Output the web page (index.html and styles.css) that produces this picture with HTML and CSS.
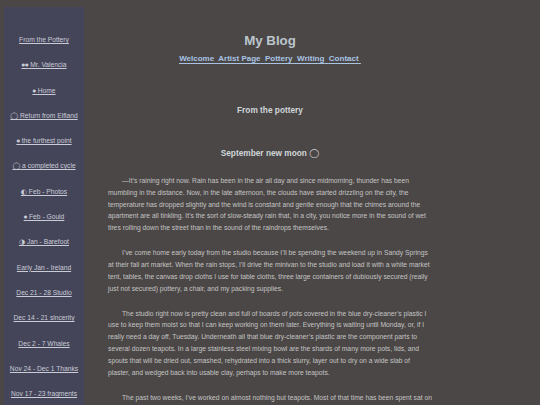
FILE: index.html
```html
<!DOCTYPE html>
<html>
<head>
    <title>My Blog</title>
    <link rel="stylesheet" href="styles.css">
</head>
<body>
    <div class="page">
        <div class="sidebar">
            <a href="#">From the Pottery</a>
            <a href="#"><span class="moon dot">●●</span> Mr. Valencia</a>
            <a href="#"><span class="moon dot">●</span> Home</a>
            <a href="#"><span class="moon">◯</span> Return from Elfland</a>
            <a href="#"><span class="moon dot">●</span> the furthest point</a>
            <a href="#"><span class="moon">◯</span> a completed cycle</a>
            <a href="#"><span class="moon">◐</span> Feb - Photos</a>
            <a href="#"><span class="moon dot">●</span> Feb - Gould</a>
            <a href="#"><span class="moon">◑</span> Jan - Barefoot</a>
            <a href="#">Early Jan - Ireland</a>
            <a href="#">Dec 21 - 28 Studio</a>
            <a href="#">Dec 14 - 21 sincerity</a>
            <a href="#">Dec 2 - 7 Whales</a>
            <a href="#">Nov 24 - Dec 1 Thanks</a>
            <a href="#">Nov 17 - 23 fragments</a>
            <a href="#">Nov 10 - 16 glaze</a>
        </div>
        <div class="main">
            <div class="blog-title">My Blog</div>
            <div class="menu"><span class="menu-line"><a href="#">Welcome</a>&nbsp; <a href="#">Artist Page</a>&nbsp; <a href="#">Pottery</a>&nbsp; <a href="#">Writing</a>&nbsp; <a href="#">Contact</a>&nbsp;</span></div>

            <h2 class="section-title">From the pottery</h2>
            <h3 class="post-title">September new moon <span class="moon">◯</span></h3>

            <p>—It’s raining right now. Rain has been in the air all day and since midmorning, thunder has been mumbling in the distance. Now, in the late afternoon, the clouds have started drizzling on the city, the temperature has dropped slightly and the wind is constant and gentle enough that the chimes around the apartment are all tinkling. It’s the sort of slow-steady rain that, in a city, you notice more in the sound of wet tires rolling down the street than in the sound of the raindrops themselves.</p>

            <p>I’ve come home early today from the studio because I’ll be spending the weekend up in Sandy Springs at their fall art market. When the rain stops, I’ll drive the minivan to the studio and load it with a white market tent, tables, the canvas drop cloths I use for table cloths, three large containers of dubiously secured (really just not secured) pottery, a chair, and my packing supplies.</p>

            <p>The studio right now is pretty clean and full of boards of pots covered in the blue dry-cleaner’s plastic I use to keep them moist so that I can keep working on them later. Everything is waiting until Monday, or, if I really need a day off, Tuesday. Underneath all that blue dry-cleaner’s plastic are the component parts to several dozen teapots. In a large stainless steel mixing bowl are the shards of many more pots, lids, and spouts that will be dried out, smashed, rehydrated into a thick slurry, layer out to dry on a wide slab of plaster, and wedged back into usable clay, perhaps to make more teapots.</p>

            <p>The past two weeks, I’ve worked on almost nothing but teapots. Most of that time has been spent sat on the stool at the wheel, throwing bodies and lids and spouts, trimming them and putting them back under plastic.</p>
        </div>
    </div>
</body>
</html>
```

FILE: styles.css
```css
body {
    margin: 0;
    background-color: #4b4746;
    font-family: "Liberation Sans", Arial, sans-serif;
    color: #c4c4c4;
}
.page {
    display: flex;
    align-items: flex-start;
}

/* Left column of post links */
.sidebar {
    flex: none;
    width: 80px;
    margin: 7px 0 0 4px;
    padding: 28px 0 20px;
    background-color: #45455a;
    display: flex;
    flex-direction: column;
    align-items: center;
    gap: 15.3px;
}
.sidebar a {
    color: #c9ccd6;
    font-size: 6.7px;
    line-height: 10px;
    white-space: nowrap;
}
.moon {
    font-family: "DejaVu Sans", sans-serif;
    font-size: 7px;
}
.moon.dot {
    font-size: 4px;
    vertical-align: 1px;
}

/* Main column */
.main {
    flex: 1;
    padding: 33px 108px 0 24px;
}
.blog-title {
    text-align: center;
    font-size: 13.3px;
    line-height: 16px;
    font-weight: bold;
    color: #bcc6cc;
}
.menu {
    margin-top: 5px;
    text-align: center;
    font-size: 8px;
    line-height: 10px;
    font-weight: bold;
}
.menu-line {
    text-decoration: underline;
    text-underline-offset: 2px;
    color: #a9c3e2;
}
.menu a {
    color: #a9c3e2;
}
.section-title {
    margin: 41px 0 0;
    text-align: center;
    font-size: 8.3px;
    line-height: 10px;
    color: #d0d6da;
}
.post-title {
    margin: 33px 0 0;
    text-align: center;
    font-size: 8.3px;
    line-height: 10px;
    color: #d0d6da;
}
.post-title .moon {
    font-size: 9px;
    font-weight: normal;
}
.main p {
    margin: 17px 0 0;
    font-size: 6.75px;
    line-height: 11.8px;
    text-indent: 14px;
}
.main p + p {
    margin-top: 13.2px;
}
```
